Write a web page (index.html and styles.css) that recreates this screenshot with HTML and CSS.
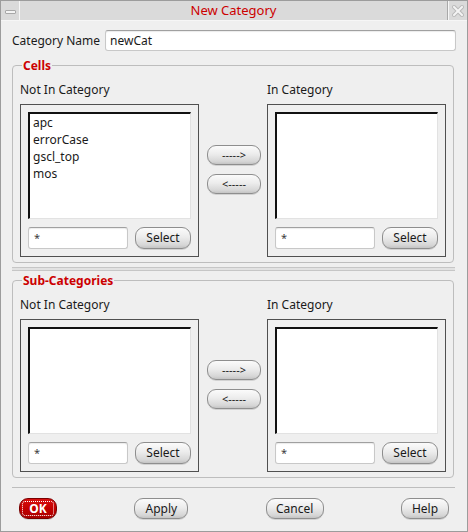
FILE: index.html
```html
<!DOCTYPE html>
<html>
<head>
<meta charset="utf-8">
<link rel="stylesheet" href="styles.css">
</head>
<body>
<div class="window">
  <div class="titlebar">
    <div class="tb-btn tb-min"><span class="min-bar"></span></div>
    <div class="tb-title">New Category</div>
    <div class="tb-btn tb-close">
      <svg width="12" height="12" viewBox="0 0 12 12">
        <path d="M2 2 L10 10 M10 2 L2 10" stroke="#b9b9b9" stroke-width="4" stroke-linecap="square"/>
        <path d="M2 2 L10 10 M10 2 L2 10" stroke="#f4f4f4" stroke-width="2" stroke-linecap="square"/>
      </svg>
    </div>
  </div>
  <div class="content">
    <div class="name-row">
      <label class="name-label">Category Name</label>
      <div class="text-input name-input">newCat</div>
    </div>

    <fieldset class="group group-cells">
      <legend>Cells</legend>
      <div class="cols">
        <div class="col">
          <div class="col-label">Not In Category</div>
          <div class="frame">
            <div class="list">
              <div class="item">apc</div>
              <div class="item">errorCase</div>
              <div class="item">gscl_top</div>
              <div class="item">mos</div>
            </div>
            <div class="filter-row">
              <div class="text-input filter">*</div>
              <div class="btn select-btn">Select</div>
            </div>
          </div>
        </div>
        <div class="mid">
          <div class="btn arrow-btn">-----&gt;</div>
          <div class="btn arrow-btn">&lt;-----</div>
        </div>
        <div class="col">
          <div class="col-label">In Category</div>
          <div class="frame">
            <div class="list"></div>
            <div class="filter-row">
              <div class="text-input filter">*</div>
              <div class="btn select-btn">Select</div>
            </div>
          </div>
        </div>
      </div>
    </fieldset>

    <div class="sash"></div>

    <fieldset class="group group-sub">
      <legend>Sub-Categories</legend>
      <div class="cols">
        <div class="col">
          <div class="col-label">Not In Category</div>
          <div class="frame">
            <div class="list"></div>
            <div class="filter-row">
              <div class="text-input filter">*</div>
              <div class="btn select-btn">Select</div>
            </div>
          </div>
        </div>
        <div class="mid">
          <div class="btn arrow-btn">-----&gt;</div>
          <div class="btn arrow-btn">&lt;-----</div>
        </div>
        <div class="col">
          <div class="col-label">In Category</div>
          <div class="frame">
            <div class="list"></div>
            <div class="filter-row">
              <div class="text-input filter">*</div>
              <div class="btn select-btn">Select</div>
            </div>
          </div>
        </div>
      </div>
    </fieldset>

    <div class="separator"></div>

    <div class="actions">
      <div class="btn ok-btn"><span class="ok-inner">OK</span></div>
      <div class="btn apply-btn">Apply</div>
      <div class="btn cancel-btn">Cancel</div>
      <div class="btn help-btn">Help</div>
    </div>
  </div>
</div>
</body>
</html>
```
FILE: styles.css
```css
* { box-sizing: border-box; }
html, body { margin: 0; padding: 0; }
body {
  font-family: "Noto Sans", "DejaVu Sans", sans-serif;
  font-size: 12px;
  color: #1a1a1a;
  background: #efefef;
}
.window {
  width: 468px;
  height: 532px;
  border: 1px solid #9c9c9c;
  background: #efefef;
  display: flex;
  flex-direction: column;
}
.titlebar {
  height: 20px;
  display: flex;
  background: #dadada;
  border-bottom: 1px solid #f6f6f6;
}
.tb-btn {
  width: 19px;
  height: 19px;
  display: flex;
  align-items: center;
  justify-content: center;
}
.tb-min { border-right: 1px solid #f6f6f6; }
.min-bar {
  width: 11px;
  height: 4px;
  border: 1px solid #a8a8a8;
  background: #f4f4f4;
  border-radius: 1px;
  margin-top: 3px;
}
.tb-close { border-left: 1px solid #f6f6f6; }
.tb-title {
  flex: 1;
  text-align: center;
  color: #cc0000;
  font-size: 13px;
  line-height: 19px;
  border-right: 1px solid #a8a8a8;
}
.content {
  flex: 1;
  padding: 9px 11px 0 11px;
  display: flex;
  flex-direction: column;
}
.name-row {
  display: flex;
  align-items: center;
  height: 21px;
}
.name-label { width: 93px; }
.text-input {
  background: #fff;
  border: 1px solid #c8c8c8;
  border-top-color: #a0a0a0;
  border-radius: 3px;
  box-shadow: inset 0 1px 1px rgba(0,0,0,0.08);
}
.name-input {
  width: 351px;
  height: 21px;
  line-height: 19px;
  padding-left: 4px;
  font-size: 12px;
}
fieldset.group {
  margin: 8px 0 0 0;
  padding: 10px 7px 5px 7px;
  border: 1px solid #bdbdbd;
  border-radius: 4px;
  width: 442px;
  min-width: 0;
}
fieldset.group legend {
  color: #cc0000;
  font-weight: bold;
  font-size: 12px;
  line-height: 13px;
  padding: 0 1px;
  margin-left: 2px;
}
.cols {
  display: flex;
  align-items: center;
}
.col { width: 179px; }
.col-label {
  line-height: 15px;
  margin-bottom: 7px;
}
.frame {
  border: 1px solid #505050;
  padding: 7px;
}
.list {
  height: 107px;
  background: #fff;
  border-top: 2px solid #111;
  border-left: 2px solid #111;
  border-right: 1px solid #e2e2e2;
  border-bottom: 1px solid #e2e2e2;
  padding: 0 3px;
}
.item {
  line-height: 17px;
  height: 17px;
}
.filter-row {
  display: flex;
  justify-content: space-between;
  margin-top: 8px;
}
.filter {
  width: 100px;
  height: 22px;
  line-height: 20px;
  padding-left: 5px;
  font-size: 11px;
  color: #3b3b3b;
}
.btn {
  border: 1px solid #8e8e8e;
  border-radius: 9px;
  background: linear-gradient(#fbfbfb 0%, #ececec 45%, #d6d6d6 85%, #c4c4c4 100%);
  text-align: center;
  color: #1a1a1a;
  box-shadow: 0 1px 0 rgba(0,0,0,0.12);
}
.select-btn {
  width: 56px;
  height: 22px;
  line-height: 20px;
}
.mid {
  width: 68px;
  display: flex;
  flex-direction: column;
  align-items: center;
  gap: 9px;
  padding-left: 2px;
}
.arrow-btn {
  width: 54px;
  height: 20px;
  line-height: 17px;
  font-size: 11px;
  letter-spacing: 0;
}
.sash {
  height: 4px;
  margin: 4px 0 0 0;
  border-top: 1px solid #c6c6c6;
  border-bottom: 1px solid #c6c6c6;
  background: #e2e2e2;
  width: 443px;
}
.group-sub { margin-top: 3px !important; }
.separator {
  margin-top: 9px;
  height: 1px;
  background: #bdbdbd;
  width: 443px;
}
.actions {
  display: flex;
  justify-content: space-between;
  padding: 0 7px 0 7px;
  margin-top: 10px;
}
.actions .btn {
  height: 21px;
  line-height: 19px;
}
.ok-btn {
  width: 38px;
  background: linear-gradient(#d81010 0%, #c40000 50%, #a80000 100%);
  border-color: #7a0000;
  padding: 2px;
  line-height: 15px !important;
}
.ok-inner {
  display: block;
  height: 15px;
  border: 1px dotted #fff;
  border-radius: 3px;
  color: #fff;
  font-weight: bold;
  line-height: 13px;
}
.apply-btn { width: 54px; }
.cancel-btn { width: 58px; }
.help-btn { width: 48px; }
```
